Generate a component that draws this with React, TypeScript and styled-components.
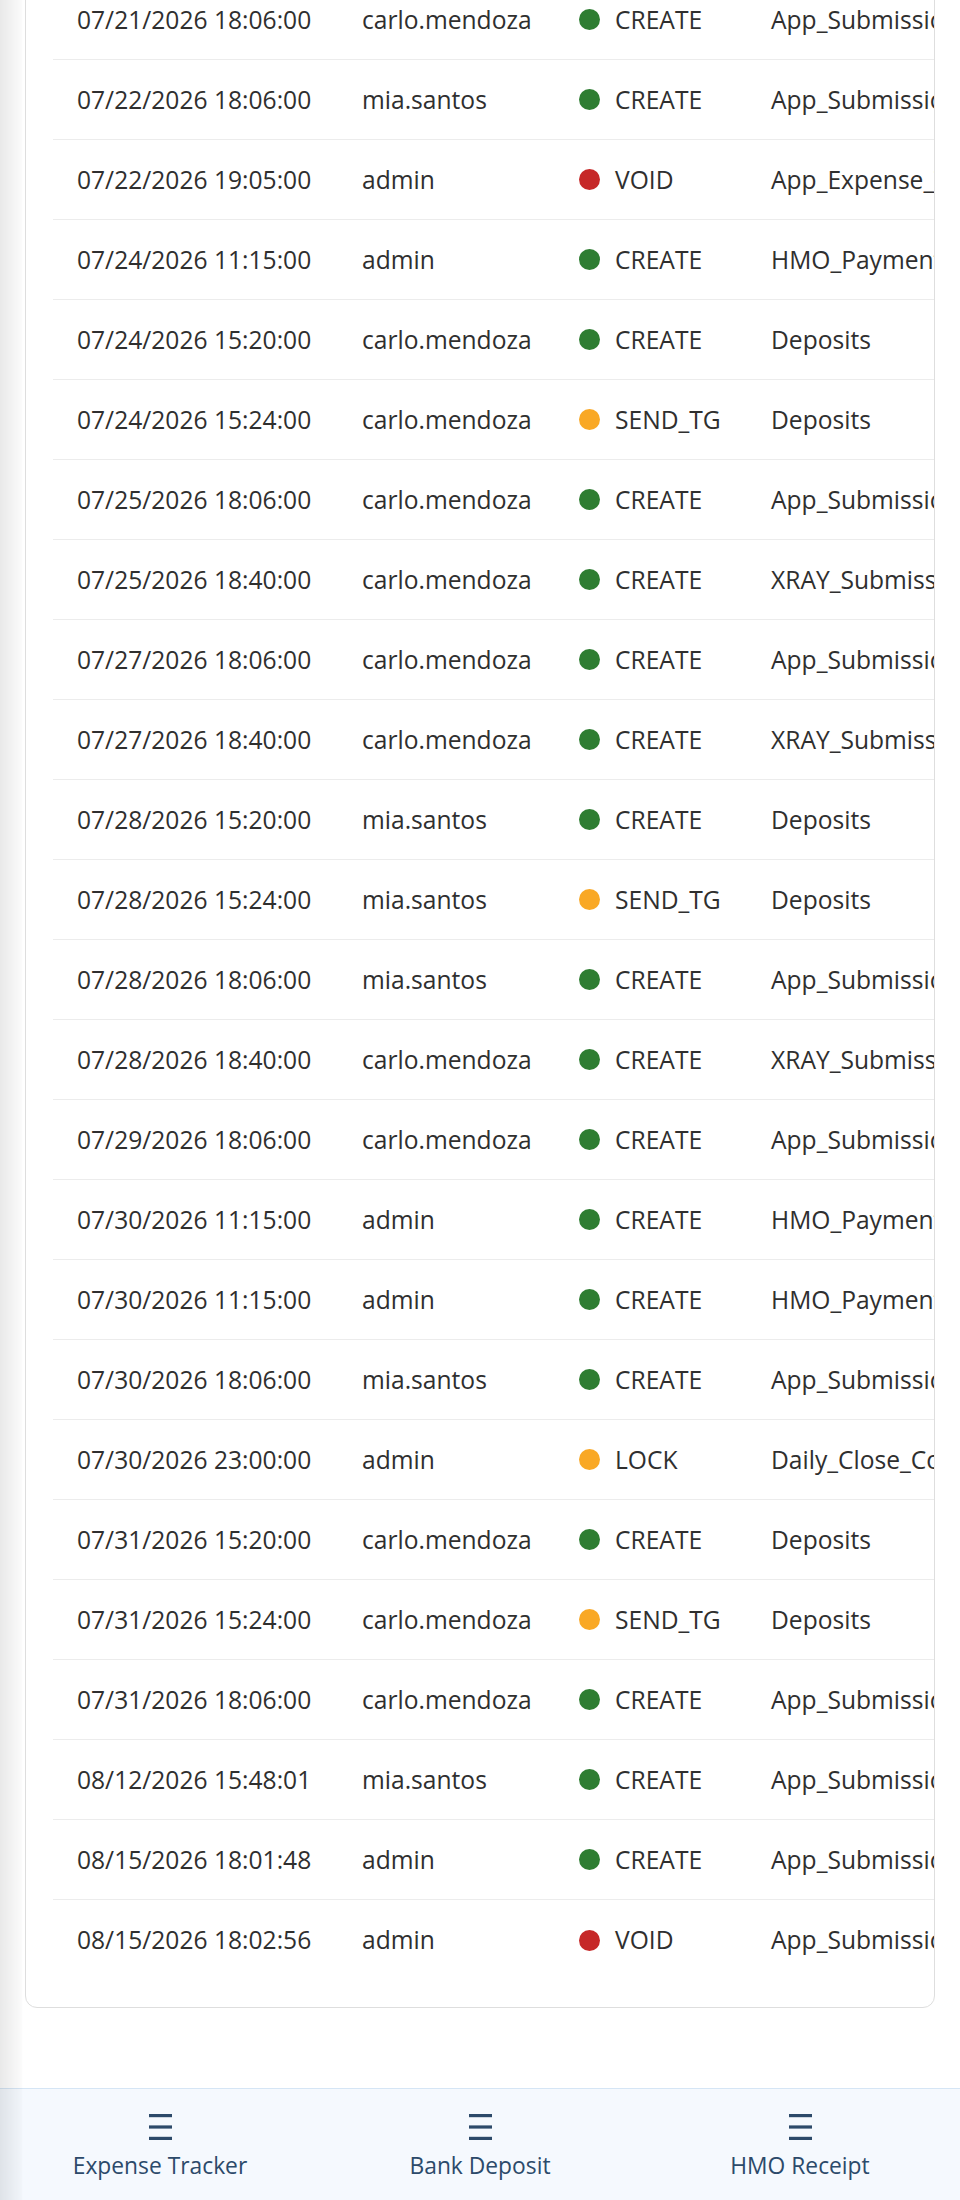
import React from "react";
import styled, { createGlobalStyle } from "styled-components";

const GlobalStyle = createGlobalStyle`
  html, body {
    margin: 0;
    padding: 0;
    background: #ffffff;
    font-family: "Open Sans", "Noto Sans", "Liberation Sans", sans-serif;
    color: #333333;
  }
  * { box-sizing: border-box; }
`;

const Page = styled.div`
  min-height: 2200px;
  padding: 0 25px 200px 25px;
  overflow: hidden;
`;

const EdgeShade = styled.div`
  position: fixed;
  left: 0;
  top: 0;
  bottom: 0;
  width: 23px;
  pointer-events: none;
  z-index: 5;
  background: linear-gradient(
    to right,
    rgba(0, 0, 0, 0.085),
    rgba(0, 0, 0, 0.02) 21px,
    rgba(0, 0, 0, 0) 23px
  );
`;

const Card = styled.section`
  margin-top: -45px;
  border: 1.5px solid #dedede;
  border-radius: 12px;
  padding: 24px 0 27px 27px;
  background: #ffffff;
  overflow: hidden;
`;

const TableScroll = styled.div`
  overflow: hidden;
`;

const Row = styled.div`
  display: grid;
  grid-template-columns: 285px 217px 192px 300px;
  align-items: center;
  width: max-content;
  min-width: 100%;
  height: 80px;
  border-bottom: 1.5px solid #ececec;
  &:last-child {
    border-bottom: none;
  }
`;

const Cell = styled.div`
  padding-left: 24px;
  font-size: 24.6px;
  line-height: 32px;
  white-space: nowrap;
  color: #2f2f2f;
`;

const ActionCell = styled(Cell)`
  display: flex;
  align-items: center;
  gap: 15px;
`;

const Dot = styled.span<{ $color: string }>`
  width: 21px;
  height: 21px;
  border-radius: 50%;
  background: ${(p) => p.$color};
  flex: none;
`;

const BottomNav = styled.nav`
  position: fixed;
  left: 0;
  right: 0;
  bottom: 0;
  height: 112px;
  display: grid;
  grid-template-columns: repeat(3, 1fr);
  background: #f5f9fe;
  border-top: 1.5px solid #d5e5f5;
  z-index: 4;
`;

const NavItem = styled.button`
  display: flex;
  flex-direction: column;
  align-items: center;
  justify-content: flex-start;
  gap: 11px;
  padding: 24px 0 0;
  border: none;
  background: transparent;
  font-family: inherit;
  font-size: 22.8px;
  line-height: 28px;
  color: #2c4a6a;
  cursor: pointer;
`;

const MenuIcon = () => (
  <svg width="23" height="28" viewBox="0 0 23 28" aria-hidden="true">
    <rect x="0" y="1" width="23" height="3.2" fill="#2c4a6a" />
    <rect x="0" y="12.4" width="23" height="3.2" fill="#2c4a6a" />
    <rect x="0" y="23.8" width="23" height="3.2" fill="#2c4a6a" />
  </svg>
);

type Log = [string, string, string, string];

const logs: Log[] = [
  ["07/21/2026 18:06:00", "carlo.mendoza", "CREATE", "App_Submissions"],
  ["07/22/2026 18:06:00", "mia.santos", "CREATE", "App_Submissions"],
  ["07/22/2026 19:05:00", "admin", "VOID", "App_Expense_Tracker"],
  ["07/24/2026 11:15:00", "admin", "CREATE", "HMO_Payments"],
  ["07/24/2026 15:20:00", "carlo.mendoza", "CREATE", "Deposits"],
  ["07/24/2026 15:24:00", "carlo.mendoza", "SEND_TG", "Deposits"],
  ["07/25/2026 18:06:00", "carlo.mendoza", "CREATE", "App_Submissions"],
  ["07/25/2026 18:40:00", "carlo.mendoza", "CREATE", "XRAY_Submissions"],
  ["07/27/2026 18:06:00", "carlo.mendoza", "CREATE", "App_Submissions"],
  ["07/27/2026 18:40:00", "carlo.mendoza", "CREATE", "XRAY_Submissions"],
  ["07/28/2026 15:20:00", "mia.santos", "CREATE", "Deposits"],
  ["07/28/2026 15:24:00", "mia.santos", "SEND_TG", "Deposits"],
  ["07/28/2026 18:06:00", "mia.santos", "CREATE", "App_Submissions"],
  ["07/28/2026 18:40:00", "carlo.mendoza", "CREATE", "XRAY_Submissions"],
  ["07/29/2026 18:06:00", "carlo.mendoza", "CREATE", "App_Submissions"],
  ["07/30/2026 11:15:00", "admin", "CREATE", "HMO_Payments"],
  ["07/30/2026 11:15:00", "admin", "CREATE", "HMO_Payments"],
  ["07/30/2026 18:06:00", "mia.santos", "CREATE", "App_Submissions"],
  ["07/30/2026 23:00:00", "admin", "LOCK", "Daily_Close_Control"],
  ["07/31/2026 15:20:00", "carlo.mendoza", "CREATE", "Deposits"],
  ["07/31/2026 15:24:00", "carlo.mendoza", "SEND_TG", "Deposits"],
  ["07/31/2026 18:06:00", "carlo.mendoza", "CREATE", "App_Submissions"],
  ["08/12/2026 15:48:01", "mia.santos", "CREATE", "App_Submissions"],
  ["08/15/2026 18:01:48", "admin", "CREATE", "App_Submissions"],
  ["08/15/2026 18:02:56", "admin", "VOID", "App_Submissions"],
];

const actionColor = (a: string) => {
  if (a === "VOID") return "#c62828";
  if (a === "SEND_TG" || a === "LOCK") return "#f9a825";
  return "#2e7d32";
};

export default function App() {
  return (
    <>
      <GlobalStyle />
      <EdgeShade />
      <Page>
        <Card>
          <TableScroll>
            {logs.map((l, i) => (
              <Row key={i}>
                <Cell>{l[0]}</Cell>
                <Cell>{l[1]}</Cell>
                <ActionCell>
                  <Dot $color={actionColor(l[2])} />
                  {l[2]}
                </ActionCell>
                <Cell>{l[3]}</Cell>
              </Row>
            ))}
          </TableScroll>
        </Card>
      </Page>
      <BottomNav>
        <NavItem>
          <MenuIcon />
          Expense Tracker
        </NavItem>
        <NavItem>
          <MenuIcon />
          Bank Deposit
        </NavItem>
        <NavItem>
          <MenuIcon />
          HMO Receipt
        </NavItem>
      </BottomNav>
    </>
  );
}
